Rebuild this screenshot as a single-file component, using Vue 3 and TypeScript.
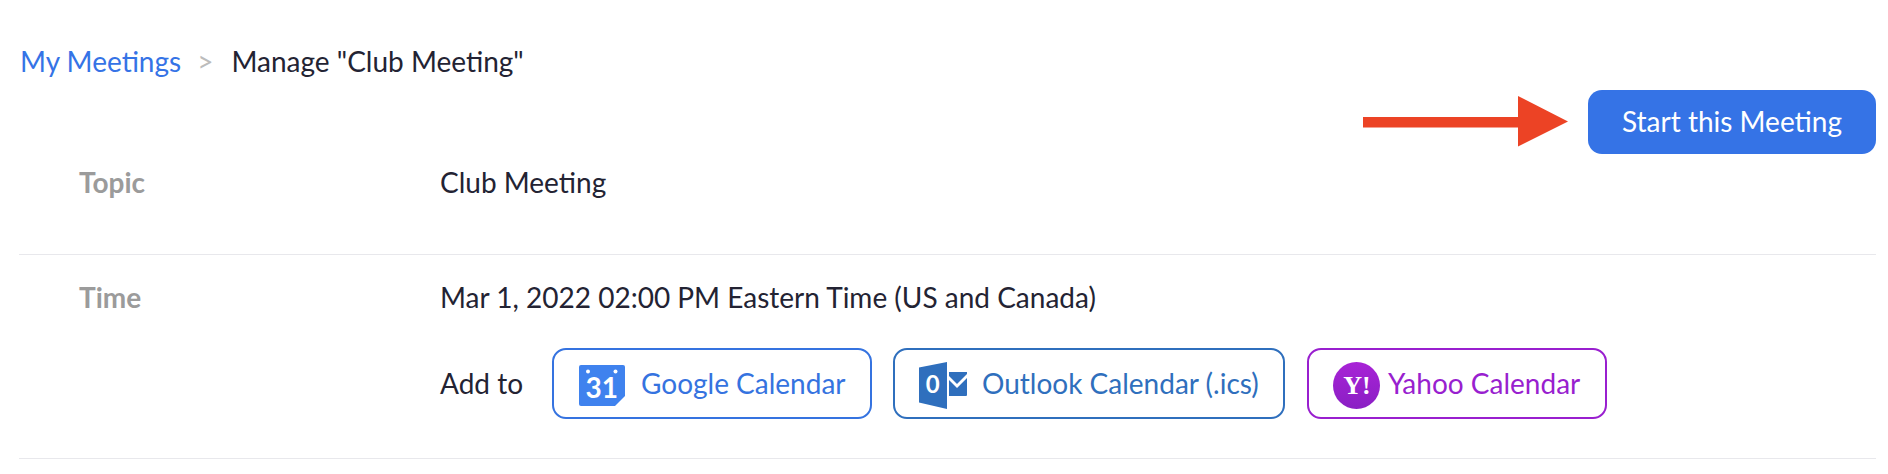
<script setup lang="ts">
interface Row { label: string; value: string }
const topic: Row = { label: 'Topic', value: 'Club Meeting' }
const time: Row = { label: 'Time', value: 'Mar 1, 2022 02:00 PM Eastern Time (US and Canada)' }
</script>

<template>
  <div class="page">
    <nav class="crumbs">
      <a class="crumb-link">My Meetings</a>
      <span class="crumb-sep">&gt;</span>
      <span class="crumb-current">Manage "Club Meeting"</span>
    </nav>

    <div class="actions">
      <svg class="arrow" width="206" height="52" viewBox="0 0 206 52">
        <polygon points="0,21 155,21 155,0 205,25.500 155,50.500 155,31.500 0,31.500" fill="#ec4325" />
      </svg>
      <button class="start">Start this Meeting</button>
    </div>

    <section class="row row-topic">
      <div class="label">{{ topic.label }}</div>
      <div class="value">{{ topic.value }}</div>
    </section>

    <section class="row row-time">
      <div class="label">{{ time.label }}</div>
      <div class="value">
        <div>{{ time.value }}</div>
        <div class="addto">
          <span class="addto-label">Add to</span>
          <a class="cal cal-google">
            <svg class="ico" width="46" height="41" viewBox="0 0 46 41">
              <path d="M2 0H44a2 2 0 0 1 2 2V31L36 41H2a2 2 0 0 1-2-2V2a2 2 0 0 1 2-2Z" fill="#3f82ee" />
              <circle cx="9" cy="6.500" r="2" fill="#fff" />
              <circle cx="36.500" cy="6.500" r="2" fill="#fff" />
              <text x="22.700" y="33" text-anchor="middle" class="g31">31</text>
            </svg>
            <span class="cal-text">Google Calendar</span>
          </a>
          <a class="cal cal-outlook">
            <svg class="ico" width="48" height="47" viewBox="0 0 48 47">
              <polygon points="0,5.500 28,0 28,47 0,40.500" fill="#2f6fbd" />
              <text x="13.700" y="31" text-anchor="middle" class="o0">0</text>
              <path d="M30 10H48V12L38 22L30 14Z" fill="#2f6fbd" />
              <path d="M30 18L38 26L48 16V33a1 1 0 0 1-1 1H30Z" fill="#2f6fbd" />
            </svg>
            <span class="cal-text">Outlook Calendar (.ics)</span>
          </a>
          <a class="cal cal-yahoo">
            <svg class="ico" width="47" height="47" viewBox="0 0 47 47">
              <defs>
                <linearGradient id="yh" x1="0.500" y1="0" x2="0.500" y2="1">
                  <stop offset="0" stop-color="#a823d6" />
                  <stop offset="1" stop-color="#8a1fc4" />
                </linearGradient>
              </defs>
              <circle cx="23.500" cy="23.500" r="23.500" fill="url(#yh)" />
              <text x="24" y="32" text-anchor="middle" class="yy">Y!</text>
            </svg>
            <span class="cal-text">Yahoo Calendar</span>
          </a>
        </div>
      </div>
    </section>
  </div>
</template>

<style scoped>
.page {
  box-sizing: border-box;
  width: 1888px;
  height: 474px;
  padding: 43px 12px 0 19px;
  background: #fff;
  color: #232333;
  font-family: Lato, "Noto Sans", sans-serif;
  font-size: 28px;
  line-height: 36px;
  overflow: hidden;
}
.crumbs {
  display: flex;
  align-items: center;
  height: 36px;
  margin-left: 1px;
}
.crumb-link { color: #3573e6; }
.crumb-sep { color: #bcbcbc; font-size: 28px; margin: 0 18px 0 16px; }
.actions {
  position: relative;
  display: flex;
  justify-content: flex-end;
  margin-top: 11px;
}
.arrow { position: absolute; left: 1344px; top: 6px; }
.start {
  width: 288px;
  height: 64px;
  border: 0;
  border-radius: 14px;
  padding: 0 0 2px;
  background: #3573e6;
  color: #fff;
  font: inherit;
}
.row { display: flex; border-bottom: 1px solid #e8e8ec; }
.row-topic { height: 101px; padding-top: 10px; box-sizing: border-box; }
.row-time { height: 204px; padding-top: 24px; box-sizing: border-box; }
.label {
  width: 421px;
  padding-left: 60px;
  box-sizing: border-box;
  color: #9b9b9b;
  font-weight: 700;
}
.addto { display: flex; align-items: center; margin-top: 33px; }
.addto-label { width: 112px; margin-top: -2px; }
.cal {
  box-sizing: border-box;
  display: flex;
  align-items: center;
  height: 71px;
  border: 2px solid currentColor;
  border-radius: 14px;
}
.cal-text { margin-top: -2px; }
.ico { margin-top: 4px; flex: none; }
.cal-google { color: #3573e0; width: 320px; padding-left: 25px; gap: 16px; }
.cal-outlook { color: #2f6fbd; width: 392px; margin-left: 21px; padding-left: 24px; gap: 15px; }
.cal-yahoo { color: #991fcf; width: 300px; margin-left: 22px; padding-left: 24px; gap: 8px; }
.g31 { font: 700 28px Lato, sans-serif; fill: #fff; }
.o0 { font: 700 24px Lato, sans-serif; fill: #fff; }
.yy { font: 700 26px "Liberation Serif", serif; fill: #fff; }
</style>

<style>
html, body { margin: 0; background: #fff; }
</style>
